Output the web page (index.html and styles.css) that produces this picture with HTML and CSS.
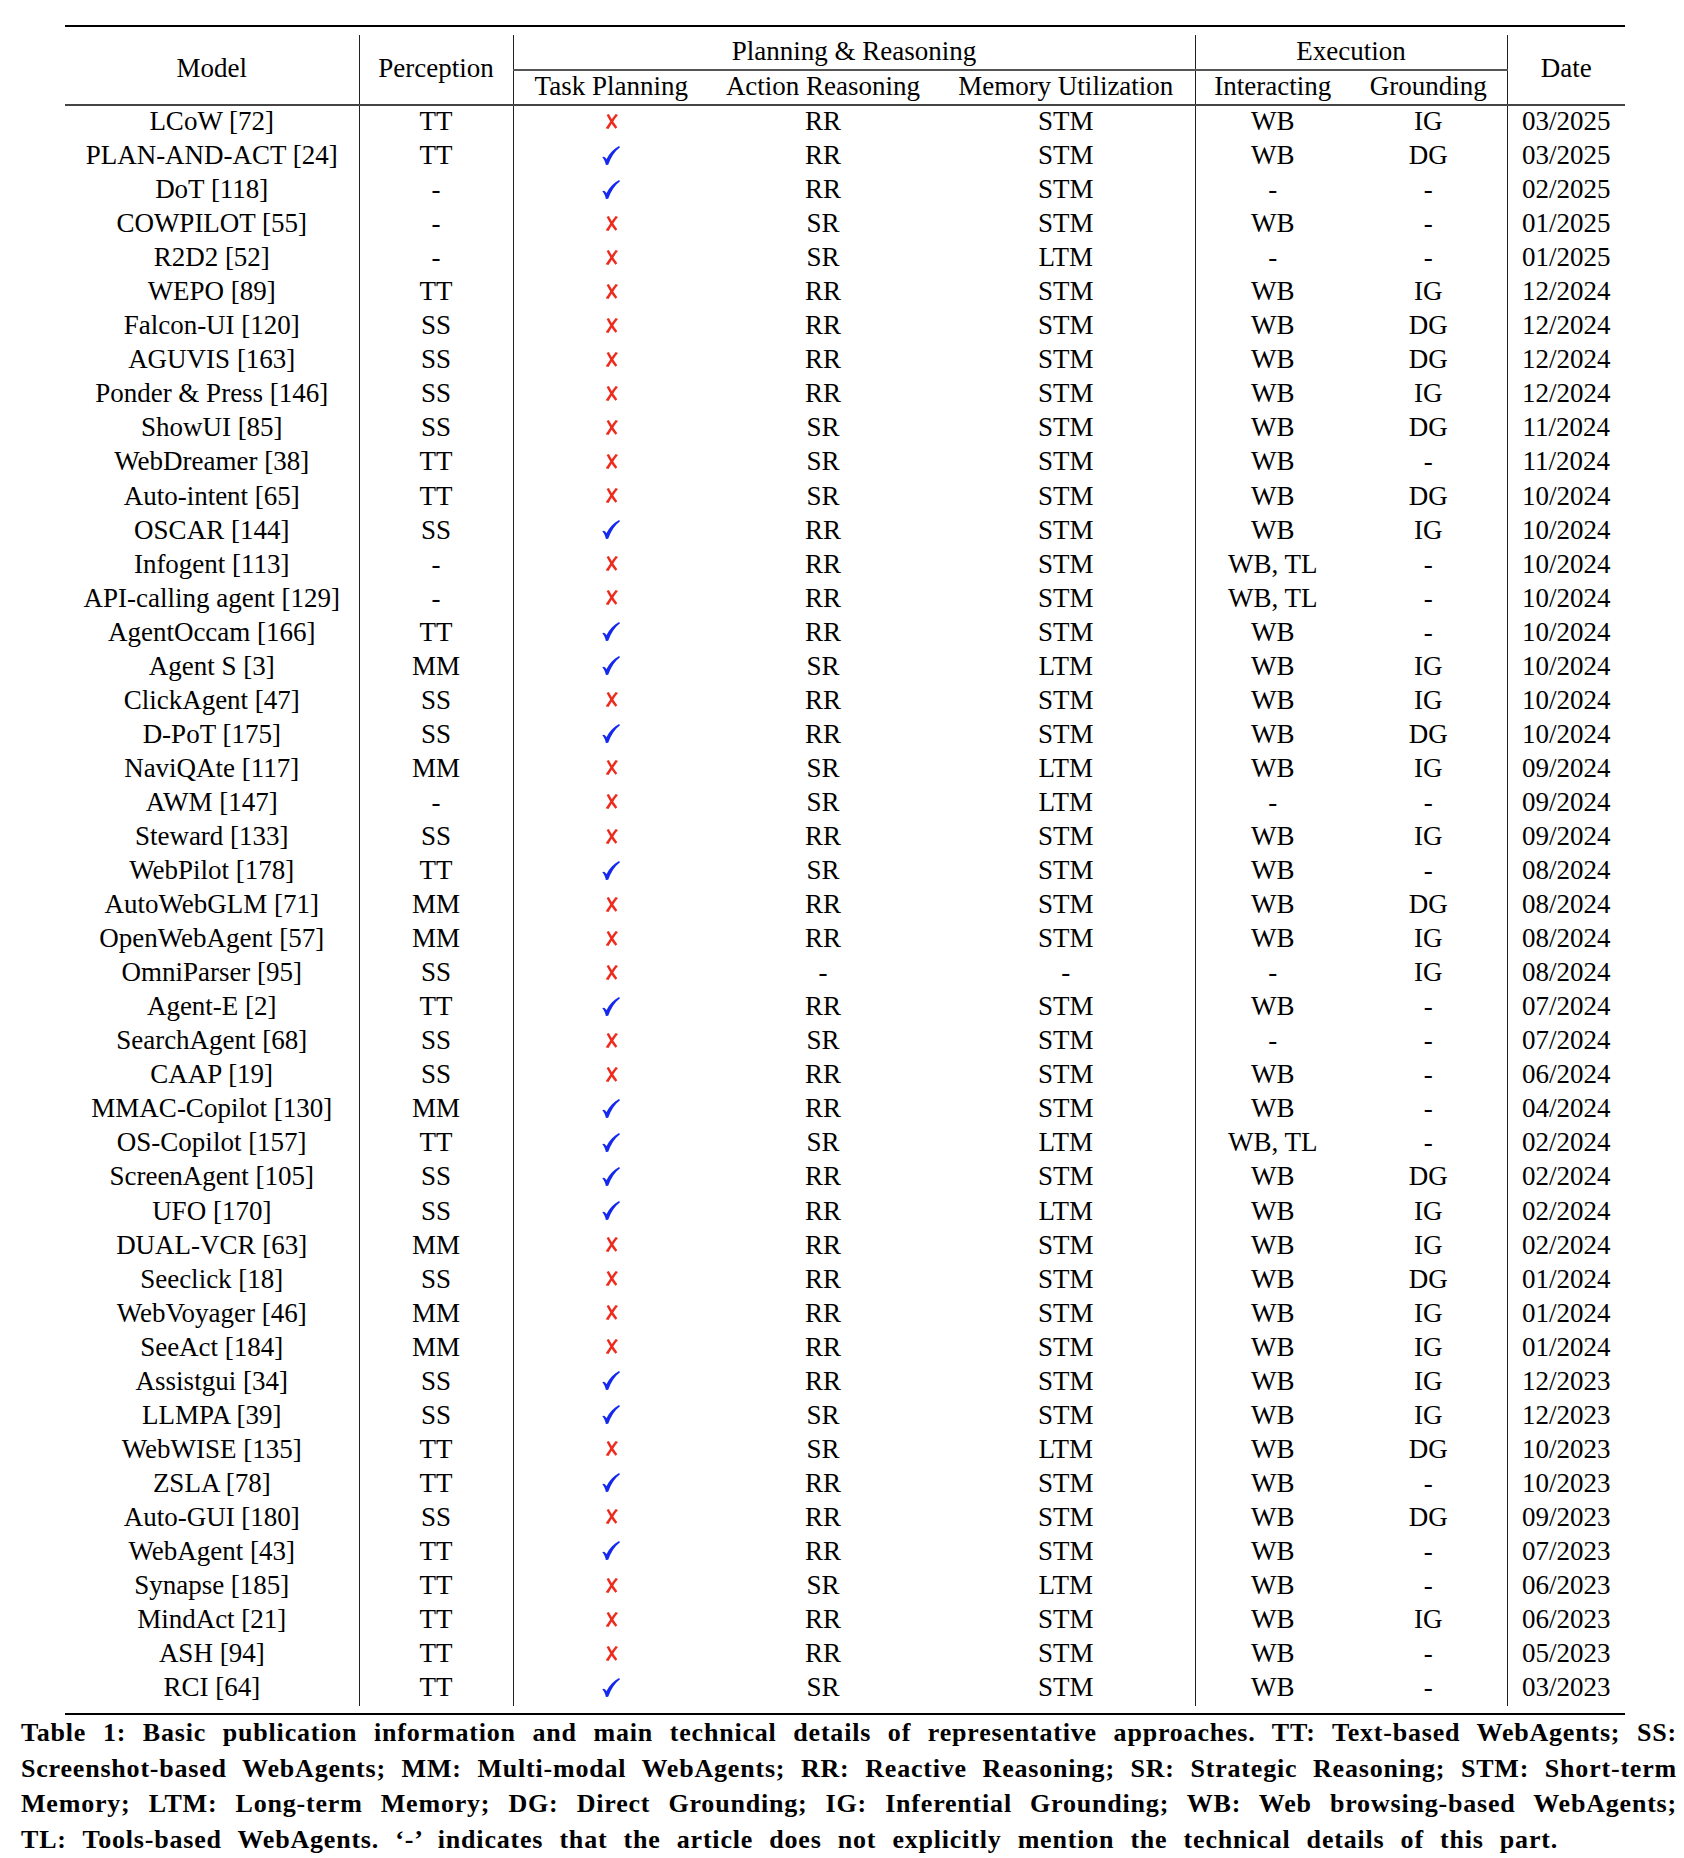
FILE: index.html
```html
<!DOCTYPE html>
<html lang="en">
<head>
<meta charset="utf-8">
<title>Table 1</title>
<link rel="stylesheet" href="styles.css">
</head>
<body>
<svg class="defs" aria-hidden="true">
  <symbol id="chk" viewBox="0 0 18 19">
    <path d="M0.3 11.2 C1.8 10.1 3.3 10.8 4.4 13.2 C7.6 7.4 11.5 2.8 17.1 0 L18 1.2 C12.8 5.1 9.1 10.9 6.2 18.7 L3.9 18.9 C3.1 15.5 2 13.1 0.3 11.2 Z"/>
  </symbol>
  <symbol id="crs" viewBox="0 0 13 15">
    <path d="M10.7 0 L13 1.1 C9.7 5 6.8 9.7 3.5 15 L0.7 14.2 C4.2 9.1 7.2 4.4 10.7 0 Z"/>
    <path d="M1.6 0.9 L3.9 0.1 C6.2 4.5 8.8 8.9 12.3 13.2 L10.4 14.8 C7.2 10.7 4.4 6.2 1.6 0.9 Z"/>
  </symbol>
</svg>
<div class="page">
  <div class="tbl-block">
    <div class="toprule"></div>
    <table class="grid">
      <colgroup>
        <col class="c-model"><col class="c-perc"><col class="c-task"><col class="c-act"><col class="c-mem"><col class="c-int"><col class="c-gnd"><col class="c-date">
      </colgroup>
      <thead>
        <tr class="hrow1">
          <th rowspan="2" class="vl mid">Model</th>
          <th rowspan="2" class="vl mid">Perception</th>
          <th colspan="3" class="vl cmid">Planning &amp; Reasoning</th>
          <th colspan="2" class="vl cmid">Execution</th>
          <th rowspan="2" class="mid">Date</th>
        </tr>
        <tr class="hrow2">
          <th class="mid">Task Planning</th>
          <th class="mid">Action Reasoning</th>
          <th class="mid vl">Memory Utilization</th>
          <th class="mid">Interacting</th>
          <th class="mid vl">Grounding</th>
        </tr>
      </thead>
      <tbody>
        <tr><td>LCoW [72]</td><td>TT</td><td><svg class="x"><use href="#crs"/></svg></td><td>RR</td><td>STM</td><td>WB</td><td>IG</td><td>03/2025</td></tr>
        <tr><td>PLAN-AND-ACT [24]</td><td>TT</td><td><svg class="ok"><use href="#chk"/></svg></td><td>RR</td><td>STM</td><td>WB</td><td>DG</td><td>03/2025</td></tr>
        <tr><td>DoT [118]</td><td>-</td><td><svg class="ok"><use href="#chk"/></svg></td><td>RR</td><td>STM</td><td>-</td><td>-</td><td>02/2025</td></tr>
        <tr><td>COWPILOT [55]</td><td>-</td><td><svg class="x"><use href="#crs"/></svg></td><td>SR</td><td>STM</td><td>WB</td><td>-</td><td>01/2025</td></tr>
        <tr><td>R2D2 [52]</td><td>-</td><td><svg class="x"><use href="#crs"/></svg></td><td>SR</td><td>LTM</td><td>-</td><td>-</td><td>01/2025</td></tr>
        <tr><td>WEPO [89]</td><td>TT</td><td><svg class="x"><use href="#crs"/></svg></td><td>RR</td><td>STM</td><td>WB</td><td>IG</td><td>12/2024</td></tr>
        <tr><td>Falcon-UI [120]</td><td>SS</td><td><svg class="x"><use href="#crs"/></svg></td><td>RR</td><td>STM</td><td>WB</td><td>DG</td><td>12/2024</td></tr>
        <tr><td>AGUVIS [163]</td><td>SS</td><td><svg class="x"><use href="#crs"/></svg></td><td>RR</td><td>STM</td><td>WB</td><td>DG</td><td>12/2024</td></tr>
        <tr><td>Ponder &amp; Press [146]</td><td>SS</td><td><svg class="x"><use href="#crs"/></svg></td><td>RR</td><td>STM</td><td>WB</td><td>IG</td><td>12/2024</td></tr>
        <tr><td>ShowUI [85]</td><td>SS</td><td><svg class="x"><use href="#crs"/></svg></td><td>SR</td><td>STM</td><td>WB</td><td>DG</td><td>11/2024</td></tr>
        <tr><td>WebDreamer [38]</td><td>TT</td><td><svg class="x"><use href="#crs"/></svg></td><td>SR</td><td>STM</td><td>WB</td><td>-</td><td>11/2024</td></tr>
        <tr><td>Auto-intent [65]</td><td>TT</td><td><svg class="x"><use href="#crs"/></svg></td><td>SR</td><td>STM</td><td>WB</td><td>DG</td><td>10/2024</td></tr>
        <tr><td>OSCAR [144]</td><td>SS</td><td><svg class="ok"><use href="#chk"/></svg></td><td>RR</td><td>STM</td><td>WB</td><td>IG</td><td>10/2024</td></tr>
        <tr><td>Infogent [113]</td><td>-</td><td><svg class="x"><use href="#crs"/></svg></td><td>RR</td><td>STM</td><td>WB, TL</td><td>-</td><td>10/2024</td></tr>
        <tr><td>API-calling agent [129]</td><td>-</td><td><svg class="x"><use href="#crs"/></svg></td><td>RR</td><td>STM</td><td>WB, TL</td><td>-</td><td>10/2024</td></tr>
        <tr><td>AgentOccam [166]</td><td>TT</td><td><svg class="ok"><use href="#chk"/></svg></td><td>RR</td><td>STM</td><td>WB</td><td>-</td><td>10/2024</td></tr>
        <tr><td>Agent S [3]</td><td>MM</td><td><svg class="ok"><use href="#chk"/></svg></td><td>SR</td><td>LTM</td><td>WB</td><td>IG</td><td>10/2024</td></tr>
        <tr><td>ClickAgent [47]</td><td>SS</td><td><svg class="x"><use href="#crs"/></svg></td><td>RR</td><td>STM</td><td>WB</td><td>IG</td><td>10/2024</td></tr>
        <tr><td>D-PoT [175]</td><td>SS</td><td><svg class="ok"><use href="#chk"/></svg></td><td>RR</td><td>STM</td><td>WB</td><td>DG</td><td>10/2024</td></tr>
        <tr><td>NaviQAte [117]</td><td>MM</td><td><svg class="x"><use href="#crs"/></svg></td><td>SR</td><td>LTM</td><td>WB</td><td>IG</td><td>09/2024</td></tr>
        <tr><td>AWM [147]</td><td>-</td><td><svg class="x"><use href="#crs"/></svg></td><td>SR</td><td>LTM</td><td>-</td><td>-</td><td>09/2024</td></tr>
        <tr><td>Steward [133]</td><td>SS</td><td><svg class="x"><use href="#crs"/></svg></td><td>RR</td><td>STM</td><td>WB</td><td>IG</td><td>09/2024</td></tr>
        <tr><td>WebPilot [178]</td><td>TT</td><td><svg class="ok"><use href="#chk"/></svg></td><td>SR</td><td>STM</td><td>WB</td><td>-</td><td>08/2024</td></tr>
        <tr><td>AutoWebGLM [71]</td><td>MM</td><td><svg class="x"><use href="#crs"/></svg></td><td>RR</td><td>STM</td><td>WB</td><td>DG</td><td>08/2024</td></tr>
        <tr><td>OpenWebAgent [57]</td><td>MM</td><td><svg class="x"><use href="#crs"/></svg></td><td>RR</td><td>STM</td><td>WB</td><td>IG</td><td>08/2024</td></tr>
        <tr><td>OmniParser [95]</td><td>SS</td><td><svg class="x"><use href="#crs"/></svg></td><td>-</td><td>-</td><td>-</td><td>IG</td><td>08/2024</td></tr>
        <tr><td>Agent-E [2]</td><td>TT</td><td><svg class="ok"><use href="#chk"/></svg></td><td>RR</td><td>STM</td><td>WB</td><td>-</td><td>07/2024</td></tr>
        <tr><td>SearchAgent [68]</td><td>SS</td><td><svg class="x"><use href="#crs"/></svg></td><td>SR</td><td>STM</td><td>-</td><td>-</td><td>07/2024</td></tr>
        <tr><td>CAAP [19]</td><td>SS</td><td><svg class="x"><use href="#crs"/></svg></td><td>RR</td><td>STM</td><td>WB</td><td>-</td><td>06/2024</td></tr>
        <tr><td>MMAC-Copilot [130]</td><td>MM</td><td><svg class="ok"><use href="#chk"/></svg></td><td>RR</td><td>STM</td><td>WB</td><td>-</td><td>04/2024</td></tr>
        <tr><td>OS-Copilot [157]</td><td>TT</td><td><svg class="ok"><use href="#chk"/></svg></td><td>SR</td><td>LTM</td><td>WB, TL</td><td>-</td><td>02/2024</td></tr>
        <tr><td>ScreenAgent [105]</td><td>SS</td><td><svg class="ok"><use href="#chk"/></svg></td><td>RR</td><td>STM</td><td>WB</td><td>DG</td><td>02/2024</td></tr>
        <tr><td>UFO [170]</td><td>SS</td><td><svg class="ok"><use href="#chk"/></svg></td><td>RR</td><td>LTM</td><td>WB</td><td>IG</td><td>02/2024</td></tr>
        <tr><td>DUAL-VCR [63]</td><td>MM</td><td><svg class="x"><use href="#crs"/></svg></td><td>RR</td><td>STM</td><td>WB</td><td>IG</td><td>02/2024</td></tr>
        <tr><td>Seeclick [18]</td><td>SS</td><td><svg class="x"><use href="#crs"/></svg></td><td>RR</td><td>STM</td><td>WB</td><td>DG</td><td>01/2024</td></tr>
        <tr><td>WebVoyager [46]</td><td>MM</td><td><svg class="x"><use href="#crs"/></svg></td><td>RR</td><td>STM</td><td>WB</td><td>IG</td><td>01/2024</td></tr>
        <tr><td>SeeAct [184]</td><td>MM</td><td><svg class="x"><use href="#crs"/></svg></td><td>RR</td><td>STM</td><td>WB</td><td>IG</td><td>01/2024</td></tr>
        <tr><td>Assistgui [34]</td><td>SS</td><td><svg class="ok"><use href="#chk"/></svg></td><td>RR</td><td>STM</td><td>WB</td><td>IG</td><td>12/2023</td></tr>
        <tr><td>LLMPA [39]</td><td>SS</td><td><svg class="ok"><use href="#chk"/></svg></td><td>SR</td><td>STM</td><td>WB</td><td>IG</td><td>12/2023</td></tr>
        <tr><td>WebWISE [135]</td><td>TT</td><td><svg class="x"><use href="#crs"/></svg></td><td>SR</td><td>LTM</td><td>WB</td><td>DG</td><td>10/2023</td></tr>
        <tr><td>ZSLA [78]</td><td>TT</td><td><svg class="ok"><use href="#chk"/></svg></td><td>RR</td><td>STM</td><td>WB</td><td>-</td><td>10/2023</td></tr>
        <tr><td>Auto-GUI [180]</td><td>SS</td><td><svg class="x"><use href="#crs"/></svg></td><td>RR</td><td>STM</td><td>WB</td><td>DG</td><td>09/2023</td></tr>
        <tr><td>WebAgent [43]</td><td>TT</td><td><svg class="ok"><use href="#chk"/></svg></td><td>RR</td><td>STM</td><td>WB</td><td>-</td><td>07/2023</td></tr>
        <tr><td>Synapse [185]</td><td>TT</td><td><svg class="x"><use href="#crs"/></svg></td><td>SR</td><td>LTM</td><td>WB</td><td>-</td><td>06/2023</td></tr>
        <tr><td>MindAct [21]</td><td>TT</td><td><svg class="x"><use href="#crs"/></svg></td><td>RR</td><td>STM</td><td>WB</td><td>IG</td><td>06/2023</td></tr>
        <tr><td>ASH [94]</td><td>TT</td><td><svg class="x"><use href="#crs"/></svg></td><td>RR</td><td>STM</td><td>WB</td><td>-</td><td>05/2023</td></tr>
        <tr><td>RCI [64]</td><td>TT</td><td><svg class="ok"><use href="#chk"/></svg></td><td>SR</td><td>STM</td><td>WB</td><td>-</td><td>03/2023</td></tr>
      </tbody>
    </table>
    <div class="bottomrule"></div>
  </div>
  <div class="caption">
    <div class="cl">Table 1: Basic publication information and main technical details of representative approaches. TT: Text-based WebAgents; SS:</div>
    <div class="cl">Screenshot-based WebAgents; MM: Multi-modal WebAgents; RR: Reactive Reasoning; SR: Strategic Reasoning; STM: Short-term</div>
    <div class="cl">Memory; LTM: Long-term Memory; DG: Direct Grounding; IG: Inferential Grounding; WB: Web browsing-based WebAgents;</div>
    <div class="cl last">TL: Tools-based WebAgents. ‘-’ indicates that the article does not explicitly mention the technical details of this part.</div>
  </div>
</div>
</body>
</html>
```
FILE: styles.css
```css
html, body {
  margin: 0;
  padding: 0;
  background: #fff;
  color: #000;
  font-family: "Liberation Serif", "Times New Roman", serif;
}

.defs {
  display: block;
  width: 0;
  height: 0;
  overflow: hidden;
}

.page {
  width: 1656px;
  padding: 25px 0 0 21px;
}

.tbl-block {
  width: 1560px;
  margin-left: 44px;
}

.toprule {
  height: 2px;
  background: #000;
}

.bottomrule {
  height: 2px;
  margin-top: 7px;
  background: #000;
}

.grid {
  width: 1560px;
  margin-top: 8px;
  border-collapse: collapse;
  table-layout: fixed;
  font-size: 27px;
}

.c-model { width: 294px; }
.c-perc { width: 154px; }
.c-task { width: 196px; }
.c-act { width: 228px; }
.c-mem { width: 258px; }
.c-int { width: 155px; }
.c-gnd { width: 157px; }
.c-date { width: 118px; }

.grid th,
.grid td {
  padding: 0;
  text-align: center;
  vertical-align: middle;
  font-weight: normal;
  white-space: nowrap;
  line-height: 30px;
}

.grid thead th {
  padding-bottom: 3px;
}

.hrow1 th { height: 31px; }
.hrow2 th { height: 28px; }

.grid tbody td {
  height: 30.06px;
  padding-bottom: 4px;
}

.grid .vl {
  border-right: 1px solid #222;
}

.grid tbody td:nth-child(1),
.grid tbody td:nth-child(2),
.grid tbody td:nth-child(5),
.grid tbody td:nth-child(7) {
  border-right: 1px solid #222;
}

.grid .cmid {
  border-bottom: 2px solid #555;
}

.grid .mid {
  border-bottom: 2px solid #444;
}

.x,
.ok {
  display: block;
  margin: 0 auto;
}

.x {
  width: 13px;
  height: 15px;
  fill: #ee2b1c;
}

.ok {
  width: 18px;
  height: 19px;
  fill: #1428ee;
}

.caption {
  width: 1656px;
  font-weight: bold;
  font-size: 26px;
  line-height: 35.5px;
  letter-spacing: 0.8px;
  word-spacing: 2px;
}

.cl {
  white-space: nowrap;
  text-align: justify;
  text-align-last: justify;
}

.cl.last {
  width: 1537px;
}
```
